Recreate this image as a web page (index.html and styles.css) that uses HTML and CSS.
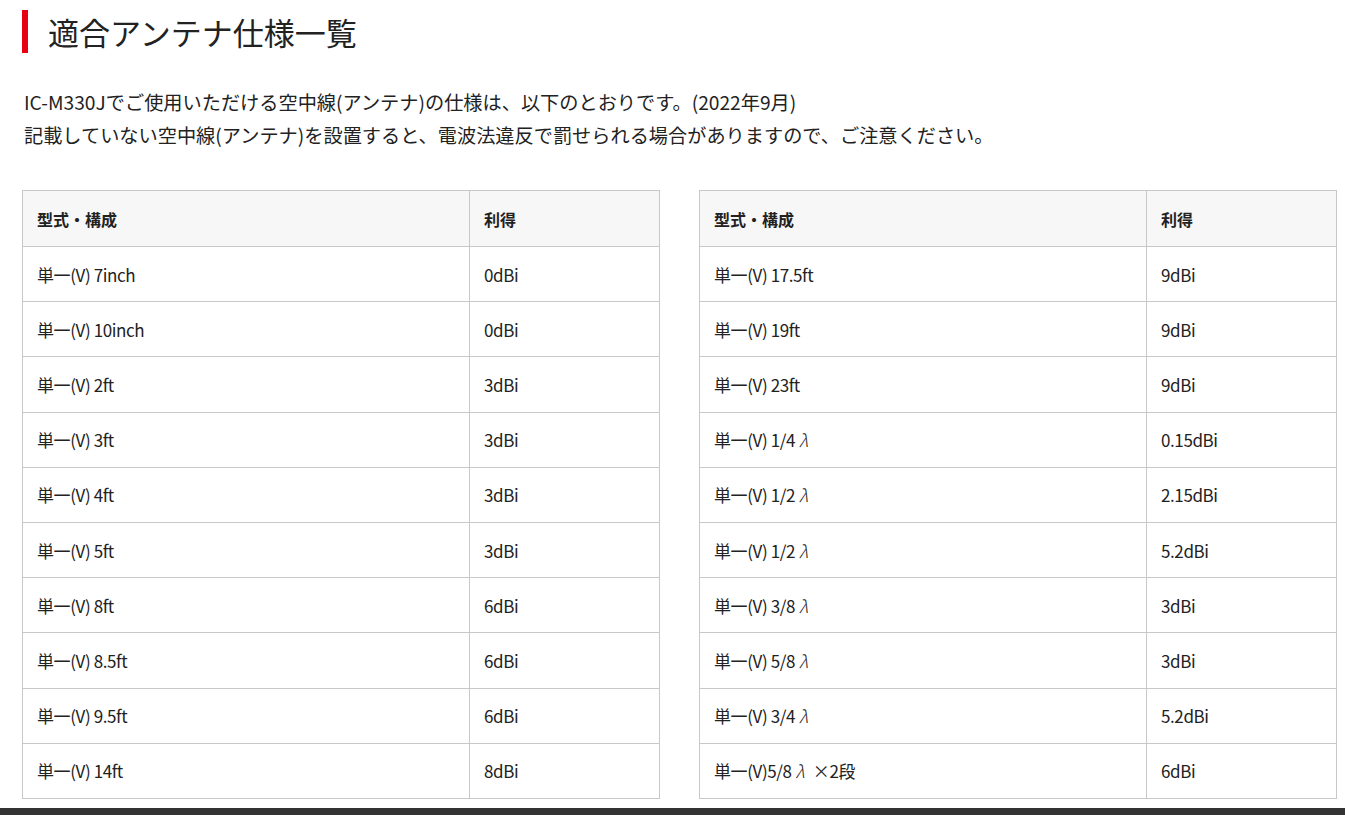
FILE: index.html
```html
<!DOCTYPE html>
<html lang="ja">
<head>
<meta charset="utf-8">
<title>適合アンテナ仕様一覧</title>
<link rel="stylesheet" href="styles.css">
</head>
<body>
<main class="page">
  <h1 class="title">適合アンテナ仕様一覧</h1>
  <p class="lead">IC-M330Jでご使用いただける空中線(アンテナ)の仕様は、以下のとおりです。(2022年9月)<br>記載していない空中線(アンテナ)を設置すると、電波法違反で罰せられる場合がありますので、ご注意ください。</p>
  <div class="tables">
    <table class="spec">
      <thead><tr><th class="c1">型式・構成</th><th>利得</th></tr></thead>
      <tbody>
        <tr><td class="c1">単一(V) 7inch</td><td>0dBi</td></tr>
        <tr><td class="c1">単一(V) 10inch</td><td>0dBi</td></tr>
        <tr><td class="c1">単一(V) 2ft</td><td>3dBi</td></tr>
        <tr><td class="c1">単一(V) 3ft</td><td>3dBi</td></tr>
        <tr><td class="c1">単一(V) 4ft</td><td>3dBi</td></tr>
        <tr><td class="c1">単一(V) 5ft</td><td>3dBi</td></tr>
        <tr><td class="c1">単一(V) 8ft</td><td>6dBi</td></tr>
        <tr><td class="c1">単一(V) 8.5ft</td><td>6dBi</td></tr>
        <tr><td class="c1">単一(V) 9.5ft</td><td>6dBi</td></tr>
        <tr><td class="c1">単一(V) 14ft</td><td>8dBi</td></tr>
      </tbody>
    </table>
    <table class="spec">
      <thead><tr><th class="c1">型式・構成</th><th>利得</th></tr></thead>
      <tbody>
        <tr><td class="c1">単一(V) 17.5ft</td><td>9dBi</td></tr>
        <tr><td class="c1">単一(V) 19ft</td><td>9dBi</td></tr>
        <tr><td class="c1">単一(V) 23ft</td><td>9dBi</td></tr>
        <tr><td class="c1">単一(V) 1/4<span class="lam">λ</span></td><td>0.15dBi</td></tr>
        <tr><td class="c1">単一(V) 1/2<span class="lam">λ</span></td><td>2.15dBi</td></tr>
        <tr><td class="c1">単一(V) 1/2<span class="lam">λ</span></td><td>5.2dBi</td></tr>
        <tr><td class="c1">単一(V) 3/8<span class="lam">λ</span></td><td>3dBi</td></tr>
        <tr><td class="c1">単一(V) 5/8<span class="lam">λ</span></td><td>3dBi</td></tr>
        <tr><td class="c1">単一(V) 3/4<span class="lam">λ</span></td><td>5.2dBi</td></tr>
        <tr><td class="c1">単一(V)5/8<span class="lam">λ</span> <span class="times">×2段</span></td><td>6dBi</td></tr>
      </tbody>
    </table>
  </div>
</main>
<footer class="footer"></footer>
</body>
</html>
```
FILE: styles.css
```css
html, body {
  margin: 0;
  padding: 0;
  background: #fff;
}
body {
  font-family: "Noto Sans CJK JP", "Noto Sans", sans-serif;
  color: #222;
  overflow: hidden;
}
.page {
  padding: 10px 8px 0 22px;
}
.title {
  margin: 0;
  font-size: 31px;
  font-weight: 400;
  line-height: 43px;
  border-left: 6px solid #e60012;
  padding-left: 20px;
  color: #222;
}
.lead {
  margin: 33px 0 0 2px;
  font-size: 19.2px;
  line-height: 33px;
  color: #222;
}
.tables {
  display: flex;
  gap: 39px;
  margin-top: 38px;
}
.spec {
  width: 638px;
  border-collapse: collapse;
  font-size: 17px;
  letter-spacing: -0.4px;
  color: #222;
}
.spec th, .spec td {
  border: 1px solid #c8c8c8;
  text-align: left;
  padding: 0 14px;
  height: 55.2px;
  box-sizing: border-box;
  vertical-align: middle;
}
.spec th {
  background: #f7f7f7;
  font-weight: 700;
  font-size: 16px;
  letter-spacing: 0;
  height: 56px;
}
.spec .c1 {
  width: 447px;
}
.lam {
  font-style: italic;
  font-weight: 300;
  margin-left: 4px;
  letter-spacing: 0;
}
.times {
  margin-left: 5px;
}
.footer {
  position: fixed;
  left: 0;
  right: 0;
  top: 808px;
  height: 20px;
  background: #333;
}
```
